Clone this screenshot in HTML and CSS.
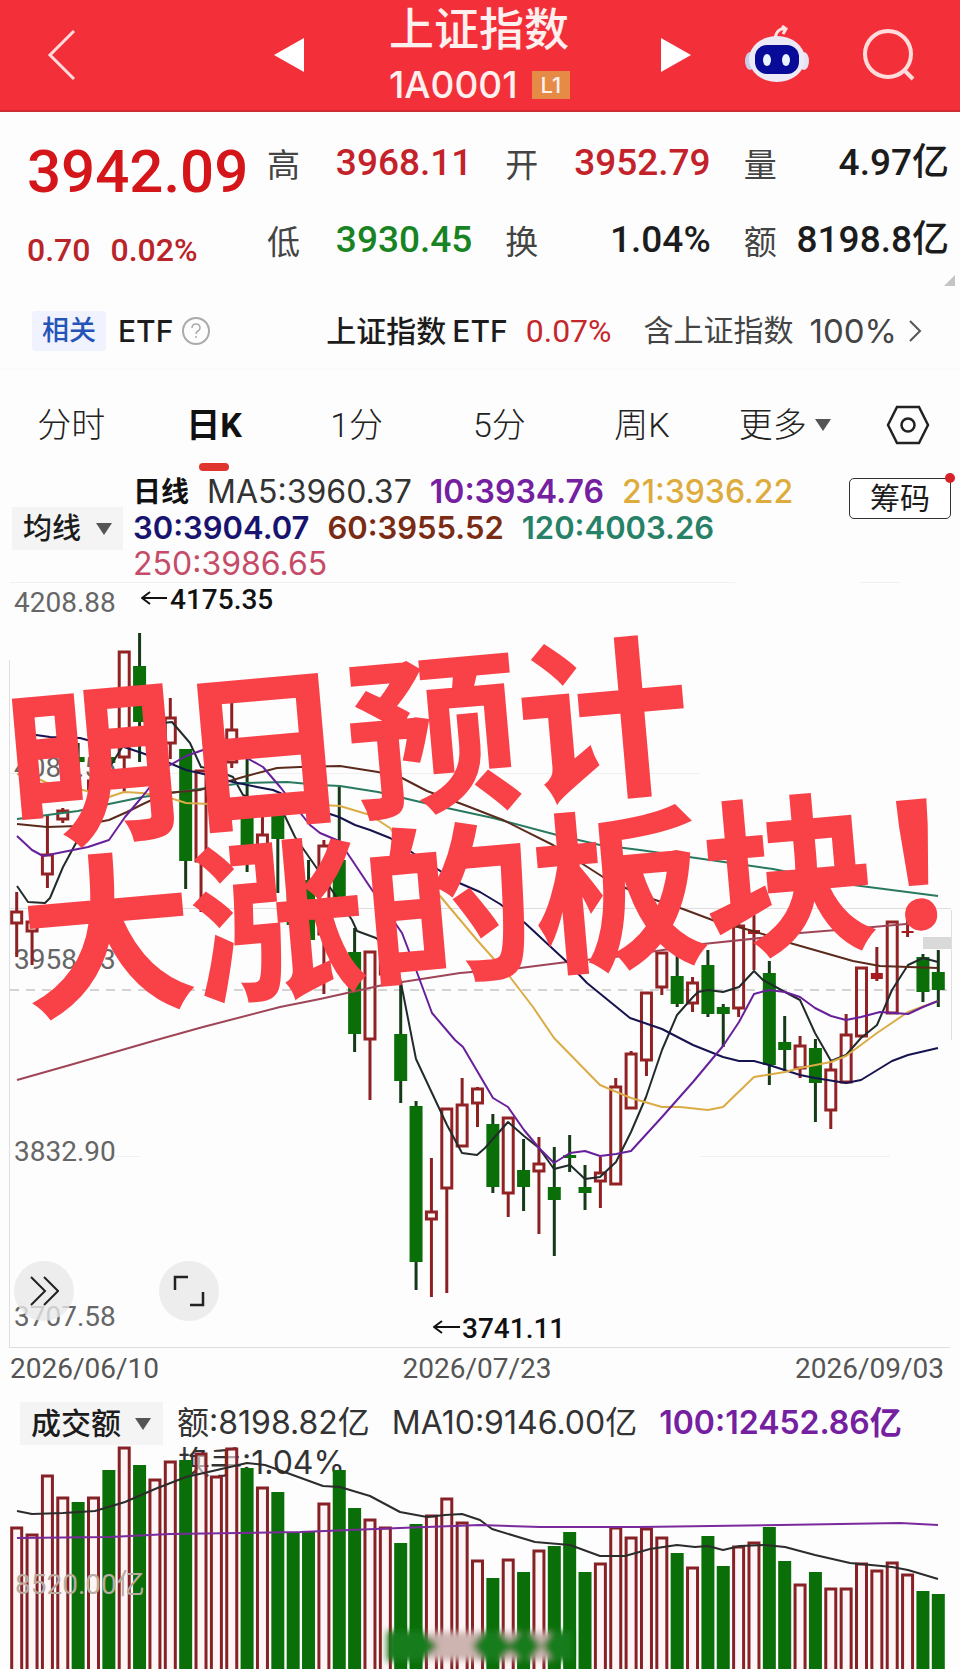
FILE: index.html
```html
<!DOCTYPE html>
<html lang="zh-CN">
<head>
<meta charset="utf-8">
<meta name="viewport" content="width=device-width, initial-scale=1">
<title>上证指数 1A0001</title>
<link rel="stylesheet" href="styles.css">
</head>
<body>
<header class="topbar">
  <button class="icon-btn back" aria-label="返回"><svg width="30" height="52" viewBox="0 0 30 52"><path d="M27 2 3 26 27 50" fill="none" stroke="#ffdcdc" stroke-width="3"/></svg></button>
  <button class="icon-btn prev" aria-label="上一个"><svg width="30" height="34" viewBox="0 0 30 34"><path d="M0 17 30 0V34Z" fill="#fff"/></svg></button>
  <div class="heading">
    <h1 class="name">上证指数</h1>
    <p class="code">1A0001<span class="level">L1</span></p>
  </div>
  <button class="icon-btn next" aria-label="下一个"><svg width="30" height="34" viewBox="0 0 30 34"><path d="M30 17 0 0V34Z" fill="#fff"/></svg></button>
  <button class="icon-btn robot" aria-label="智能助手"><svg width="66" height="60" viewBox="0 0 66 60">
    <path d="M31 14C32 6 36 3 42 4M38 1l4 3-3 5" fill="none" stroke="#ffe4e4" stroke-width="3"/>
    <ellipse cx="6" cy="36" rx="5" ry="9" fill="#c9cde6"/><ellipse cx="60" cy="36" rx="5" ry="9" fill="#e6e2f2"/>
    <ellipse cx="33" cy="34" rx="28" ry="23" fill="#eceaf6"/>
    <rect x="11" y="20" width="44" height="29" rx="12" fill="#080a98"/>
    <ellipse cx="23" cy="35" rx="4" ry="6" fill="#e8f4ff"/><ellipse cx="42" cy="35" rx="4" ry="6" fill="#e8f4ff"/>
  </svg></button>
  <button class="icon-btn search" aria-label="搜索"><svg width="54" height="52" viewBox="0 0 54 52"><circle cx="26" cy="25" r="23" fill="none" stroke="#ffdcdc" stroke-width="4"/><path d="m42 41 9 9" stroke="#ffdcdc" stroke-width="4"/></svg></button>
</header>

<section class="quote">
  <div class="last">
    <strong class="price">3942.09</strong>
    <p class="change"><span>0.70</span><span>0.02%</span></p>
  </div>
  <dl class="stats">
    <div class="stat"><dt>高</dt><dd class="up">3968.11</dd></div>
    <div class="stat"><dt>开</dt><dd class="up">3952.79</dd></div>
    <div class="stat"><dt>量</dt><dd>4.97亿</dd></div>
    <div class="stat"><dt>低</dt><dd class="down">3930.45</dd></div>
    <div class="stat"><dt>换</dt><dd>1.04%</dd></div>
    <div class="stat"><dt>额</dt><dd>8198.8亿</dd></div>
  </dl>
  <svg class="corner" width="11" height="11" viewBox="0 0 11 11"><path d="M11 0V11H0Z" fill="#c4c4c4"/></svg>
</section>

<section class="related">
  <span class="tag">相关</span><span class="etf">ETF</span>
  <svg class="help" width="28" height="28" viewBox="0 0 28 28"><circle cx="14" cy="14" r="13" fill="none" stroke="#aaa" stroke-width="2"/><path d="M10 11q0-4 4-4t4 4q0 2-2 3t-2 3m0 2v2" fill="none" stroke="#aaa" stroke-width="1.5"/></svg>
  <a class="fund" href="#">上证指数<span class="latin">ETF</span></a>
  <span class="fund-change">0.07%</span>
  <a class="weight" href="#">含上证指数<span class="latin">100%</span><svg width="13" height="22" viewBox="0 0 13 22"><path d="m1 1 10 10L1 21" fill="none" stroke="#555" stroke-width="2"/></svg></a>
</section>

<nav class="tabs">
  <button class="tab">分时</button>
  <button class="tab active">日K</button>
  <button class="tab">1分</button>
  <button class="tab">5分</button>
  <button class="tab">周K</button>
  <button class="tab more">更多<span class="caret"></span></button>
  <button class="tab" aria-label="设置"><svg width="44" height="40" viewBox="0 0 44 40"><path d="M11 2H33L42 20 33 38H11L2 20Z" fill="none" stroke="#222" stroke-width="2.5"/><circle cx="22" cy="20" r="6.5" fill="none" stroke="#222" stroke-width="2.5"/></svg></button>
</nav>

<section class="legend">
  <label class="picker"><select aria-label="指标"><option>均线</option></select><span class="caret"></span></label>
  <div class="averages">
    <p><b class="period">日线</b><span>MA5:3960.37</span><span class="ma10">10:3934.76</span><span class="ma21">21:3936.22</span></p>
    <p class="compact"><span class="ma30">30:3904.07</span><span class="ma60">60:3955.52</span><span class="ma120">120:4003.26</span></p>
    <p><span class="ma250">250:3986.65</span></p>
  </div>
  <button class="chips">筹码<span class="dot"></span></button>
</section>

<main class="panel">
  <svg class="chart" id="kline" viewBox="0 580 960 768" role="img" aria-label="日K线图"></svg>
  <p class="slogan"><span>明日预计</span><span>大涨的板块！</span></p>
  <button class="round forward" aria-label="前进"><svg width="30" height="30" viewBox="0 0 30 30"><path d="M2 1 16 15 2 29M15 1 29 15 15 29" fill="none" stroke="#222" stroke-width="2"/></svg></button>
  <button class="round expand" aria-label="全屏"><svg width="32" height="32" viewBox="0 0 32 32"><path d="M2 15V2H15M30 17V30H17" fill="none" stroke="#222" stroke-width="2.5"/></svg></button>
</main>
<div class="dates"><time>2026/06/10</time><time>2026/07/23</time><time>2026/09/03</time></div>

<section class="turnover">
  <label class="picker"><select aria-label="副图指标"><option>成交额</option></select><span class="caret"></span></label>
  <p class="amounts"><span>额:8198.82亿</span><span>MA10:9146.00亿</span><span class="ma10">100:12452.86亿</span></p>
</section>
<svg class="chart" id="volume" viewBox="0 1446 960 223" role="img" aria-label="成交额"></svg>
<script src="chart.js"></script>
</body>
</html>
```
FILE: styles.css
```css
* { box-sizing: border-box; }
body {
  margin: 0;
  background: #fdfdfd;
  color: #1c1c1c;
  font-family: Roboto, "Noto Sans CJK SC", sans-serif;
}
h1, p, dl, dd { margin: 0; }
button, select {
  border: 0;
  padding: 0;
  background: none;
  color: inherit;
  font: inherit;
  appearance: none;
}
a { color: inherit; text-decoration: none; }
svg { display: block; }

.topbar {
  display: grid;
  grid-template-columns: 47fr 227fr 115fr 182fr 120fr 53fr 118fr 98fr;
  align-items: center;
  height: 112px;
  background: #f3303a;
  border-bottom: 2px solid #cf2c34;
  color: #fff0f0;
}
.icon-btn { justify-self: start; }
.back { grid-column: 2; }
.prev { grid-column: 3; }
.heading { grid-column: 4; white-space: nowrap; }
.next { grid-column: 5; justify-self: end; }
.robot { grid-column: 7; }
.name { font-size: 45px; line-height: 60px; font-weight: 500; }
.code { display: flex; align-items: center; gap: 14px; font: 500 37px/48px Inter, sans-serif; }
.level { background: #e58b45; padding: 0 9px; font-size: 22px; line-height: 28px; }

.quote {
  position: relative;
  display: grid;
  grid-template-columns: 240px 1fr;
  padding: 24px 11px 0 27px;
  height: 178px;
  font-weight: 500;
}
.price { display: block; font-size: 60px; line-height: 72px; font-weight: 500; color: #d4161b; }
.change { display: flex; gap: 20px; margin-top: 22px; font-size: 32px; line-height: 40px; color: #b82429; }
.stats { display: grid; grid-template-columns: repeat(3, 1fr); grid-auto-rows: 77px; column-gap: 33px; margin-top: -12px; }
.stat { display: flex; justify-content: space-between; align-items: center; white-space: nowrap; }
.stat dt { font-size: 33px; font-weight: 400; color: #444; }
.stat dd { font-size: 37px; line-height: 44px; }
.up { color: #c4222a; }
.down { color: #188322; }
.corner { position: absolute; right: 5px; bottom: 4px; }

.related {
  display: flex;
  align-items: center;
  height: 80px;
  padding: 4px 38px 0 32px;
  border-bottom: 2px solid #fafafa;
  font-size: 30px;
  line-height: 40px;
  white-space: nowrap;
}
.tag { padding: 0 10px; background: #f0f2fd; border-radius: 4px; color: #2454b8; font-size: 27px; line-height: 40px; font-weight: 500; }
.etf { margin-left: 12px; font: 500 30px/40px Inter, sans-serif; }
.help { margin-left: 9px; }
.fund { margin-left: auto; font-weight: 500; }
.latin { margin-left: 6px; font: 500 30px/40px Inter, sans-serif; }
.fund-change { margin-left: 18px; color: #c4282c; font-size: 32px; }
.weight { display: flex; align-items: center; margin-left: 32px; color: #444; }
.weight .latin { margin-left: 16px; font-size: 33px; font-weight: 400; }
.weight svg { margin-left: 12px; }

.tabs { display: grid; grid-template-columns: repeat(6, 1fr) 104px; height: 105px; padding-top: 10px; }
.tab { position: relative; display: flex; justify-content: center; align-items: center; height: 90px; font-size: 34px; line-height: 44px; font-weight: 300; color: #222; }
.active { font-weight: 700; color: #111; }
.active::after { content: ""; position: absolute; bottom: -1px; width: 30px; height: 8px; border-radius: 4px; background: #e0352f; }
.caret { border: 8px solid transparent; border-top: 12px solid #555; border-bottom: 0; pointer-events: none; }
.more { gap: 8px; }

.legend { display: grid; grid-template-columns: 111px 1fr 102px; column-gap: 10px; height: 105px; padding: 0 9px 0 12px; }
.picker { display: flex; align-items: center; gap: 14px; padding: 0 11px; height: 43px; background: #f4f4f4; font-size: 29px; font-weight: 500; }
.legend .picker { margin-top: 32px; }
.picker select { line-height: 40px; }
.averages, .amounts { font-family: Inter, "Noto Sans CJK SC", sans-serif; font-size: 32px; color: #333; white-space: nowrap; }
.averages { line-height: 34px; }
.averages p { display: flex; height: 36px; gap: 18px; }
.averages .compact { font-size: 31px; }
.period { font-size: 28px; color: #111; }
.ma10 { color: #7420a0; font-weight: 600; }
.ma21 { color: #deac3c; font-weight: 500; }
.ma30 { color: #17136f; font-weight: 600; }
.ma60 { color: #7a2b14; font-weight: 600; }
.ma120 { color: #278167; font-weight: 600; }
.ma250 { color: #c54c68; }
.chips { position: relative; margin-top: 3px; height: 41px; border: 1px solid #333; border-radius: 5px; background: #fff; font-size: 30px; line-height: 38px; }
.dot { position: absolute; top: -6px; right: -5px; width: 10px; height: 10px; border-radius: 50%; background: #d8202a; }

.panel { position: relative; }
.chart { width: 100%; height: auto; overflow: visible; }
.slogan {
  position: absolute;
  top: 96px;
  left: 14px;
  color: #f94148;
  font: 700 171px/171px "Noto Sans CJK SC", sans-serif;
  font-feature-settings: "halt";
  -webkit-text-stroke: 2px #f94148;
  white-space: nowrap;
  transform: rotate(-5deg);
  transform-origin: 0 50%;
}
.slogan span { display: block; }
.round { position: absolute; bottom: 27px; display: grid; place-items: center; width: 60px; height: 60px; border-radius: 50%; background: rgba(232, 232, 232, 0.8); }
.forward { left: 14px; }
.expand { left: 159px; }
.dates { display: flex; justify-content: space-between; height: 42px; padding: 0 16px 0 10px; font-size: 28px; line-height: 41px; color: #555; }

.turnover { display: flex; gap: 14px; height: 56px; padding: 12px 20px 0; }
.turnover .picker { min-width: 143px; font-size: 30px; }
.amounts { display: flex; gap: 22px; line-height: 42px; }

.axis { font-size: 28px; fill: #666; }
.mark { font-size: 28px; font-weight: 500; fill: #111; }
.rate { font: 32px Inter, "Noto Sans CJK SC", sans-serif; fill: #333; }
.scale { font-size: 28px; fill: #b9aaa2; }
.frame { fill: none; stroke: #dedede; stroke-width: 1; }
.faint { stroke: #f1f1f1; }
.dash { stroke-dasharray: 9 7; stroke: #aaa; }
.hollow { fill: none; stroke: #922224; stroke-width: 3; }
.solid { fill: #0a6f08; stroke: none; }
.wick-up { fill: none; stroke: #8c2022; stroke-width: 3; }
.wick-down { fill: none; stroke: #143a16; stroke-width: 3; }
.line { fill: none; stroke-width: 2; stroke-linejoin: round; }
.bar { fill: #fff1f1; fill-opacity: 0.6; stroke: #862226; stroke-width: 3; }
```
FILE: chart.js
```js
const STEP = 15.36, START = 16.7;
const xAt = i => START + i * STEP;

// direction, high, body top, body bottom, low
const candles = [
  ['r',892,911,924,957],['r',915,921,932,965],['r',815,854,875,888],['r',808,810,820,823],['g',743,757,762,782],
  ['r',775,780,790,792],['g',745,757,763,766],['r',651,651,758,793],['g',633,666,722,762],['r',720,725,755,760],
  ['r',698,717,744,759],['g',749,749,861,889],['r',770,770,862,912],['r',775,775,812,815],['r',690,729,763,768],
  ['g',758,818,846,872],['r',806,834,850,856],['g',803,810,839,893],['g',850,870,925,945],['g',860,880,940,948],
  ['r',840,845,935,994],['g',787,860,898,905],['g',928,952,1034,1052],['r',951,951,1040,1100],['r',930,940,975,985],
  ['g',982,1034,1081,1103],['g',1101,1106,1262,1290],['r',1158,1211,1220,1297],['r',1108,1108,1189,1293],['r',1078,1104,1147,1147],
  ['r',1087,1088,1104,1127],['g',1114,1124,1187,1193],['r',1117,1117,1194,1217],['g',1139,1170,1187,1211],['r',1137,1163,1172,1234],
  ['g',1147,1187,1200,1256],['g',1135,1155,1158,1172],['g',1165,1187,1193,1210],['r',1157,1172,1182,1208],['r',1078,1086,1185,1185],
  ['r',1051,1053,1109,1109],['r',992,992,1061,1076],['r',952,952,988,995],['g',952,976,1004,1007],['r',977,982,1004,1012],
  ['g',950,965,1014,1017],['g',1004,1007,1014,1047],['r',920,925,1009,1017],['r',915,930,934,970],['g',961,973,1065,1085],
  ['g',1016,1042,1050,1071],['r',1036,1045,1069,1078],['g',1039,1048,1083,1122],['r',1061,1069,1111,1129],['r',1014,1034,1083,1083],
  ['r',967,967,1037,1037],['r',947,973,979,981],['r',921,921,1014,1014],['r',909,931,933,937],['g',954,957,992,1002],['g',950,972,990,1007]
];
const volumes = [
  1527,1534,1475,1497,1502,1497,1470,1447,1465,1479,1461,1460,1453,1476,1448,1468,1487,1492,1532,1532,1503,
  1470,1508,1519,1527,1543,1524,1515,1498,1522,1560,1578,1559,1572,1550,1546,1532,1572,1563,1527,1537,1528,
  1537,1553,1567,1536,1566,1546,1542,1527,1561,1584,1572,1588,1588,1563,1570,1562,1574,1591,1594
];
const priceLines = [
  ['#222b2b','17,886 28,902 45,903 50,898 63,867 83,830 105,775 116,757 130,735 145,727 163,723 172,722 190,743 201,767 212,769 233,777 243,795 281,808 295,837 325,880 352,920 357,931 376,938 395,955 401,983 416,1059 447,1125 462,1153 477,1155 485,1148 508,1122 524,1136 539,1148 554,1169 570,1165 585,1179 600,1177 616,1162 631,1132 646,1097 662,1050 677,1015 693,997 698,992 708,990 723,992 739,987 754,971 763,980 785,992 800,1000 815,1033 831,1061 846,1055 861,1038 877,1025 892,990 908,965 923,958 938,962'],
  ['#28795f','17,819 78,811 109,804 143,797 170,793 207,788 243,783 287,782 320,785 340,786 378,792 433,805 493,818 557,835 600,845 640,850 710,860 773,869 853,885 938,896'],
  ['#5a2a1c','17,824 47,827 78,826 109,820 127,812 143,804 167,793 200,790 243,777 277,768 300,767 340,766 378,772 402,778 427,791 467,806 503,820 553,845 603,877 640,895 683,909 715,921 753,931 790,943 853,961 880,966 938,968'],
  ['#9e4558','17,1080 70,1065 160,1039 203,1027 280,1007 320,999 383,985 460,973 520,968 567,962 623,956 703,944 770,937 800,933 873,927 917,923'],
  ['#16144f','17,733 36,735 50,737 80,738 109,746 124,747 142,753 167,762 186,770 208,775 233,782 257,787 273,790 327,813 339,817 355,825 370,830 390,838 457,882 480,892 500,904 525,923 567,962 587,983 630,1018 662,1029 693,1045 723,1057 739,1061 754,1061 769,1065 800,1075 815,1078 846,1083 861,1080 892,1061 908,1055 938,1048'],
  ['#dbab45','17,774 41,780 55,787 83,790 109,797 124,792 142,793 167,797 186,803 210,804 270,806 323,805 340,806 370,815 390,828 435,890 477,940 510,977 533,1007 554,1038 600,1085 631,1098 662,1107 680,1107 708,1110 723,1107 754,1077 785,1072 800,1068 831,1062 846,1056 877,1033 908,1012 938,1001'],
  ['#68209a','17,836 32,850 43,856 63,852 88,847 109,840 125,817 142,797 165,768 186,756 203,750 218,748 238,753 263,767 281,788 298,810 310,825 320,833 339,841 352,860 370,887 402,933 415,967 432,1013 455,1040 463,1047 493,1098 508,1107 524,1130 539,1148 554,1163 570,1153 585,1151 600,1156 616,1154 631,1151 662,1117 693,1082 723,1046 739,1022 754,994 769,990 785,992 800,997 815,1008 831,1016 846,1020 861,1017 880,1012 908,1014 923,1007 938,1001']
];
const volumeLines = [
  ['#2c2c2c','17,1511 32,1514 63,1513 95,1511 125,1502 155,1489 186,1477 217,1470 247,1463 265,1465 290,1474 323,1486 340,1487 370,1496 400,1512 427,1517 445,1515 462,1514 480,1520 492,1529 535,1542 570,1545 600,1556 625,1556 650,1549 677,1545 695,1547 708,1546 723,1550 740,1546 765,1545 785,1547 815,1555 850,1563 892,1567 908,1570 938,1579'],
  ['#7a2a9c','17,1538 110,1537 170,1534 300,1532 400,1528 480,1525 540,1527 640,1527 780,1525 900,1523 938,1525']
];
const drawLines = lines => lines.map(([color, points]) => `<polyline class="line" stroke="${color}" points="${points}"/>`).join('');

function drawCandle([dir, high, top, bottom, low], i) {
  const x = xAt(i);
  if (dir === 'g') {
    return `<path class="wick-down" d="M${x} ${high}V${low}"/><rect class="solid" x="${x - 6.5}" y="${top}" width="13" height="${bottom - top}"/>`;
  }
  const tall = bottom - top;
  const body = tall < 7
    ? `<rect x="${x - 6}" y="${top}" width="12" height="${tall}" fill="#a81c20"/>`
    : `<rect class="hollow" x="${x - 5}" y="${top + 1}" width="10" height="${tall - 2}"/>`;
  return `<path class="wick-up" d="M${x} ${high}V${top}M${x} ${bottom}V${low}"/>${body}`;
}

document.getElementById('kline').innerHTML = `
  <path class="frame" d="M9.5 660V1347.5H950M951.5 910V1040M10 908.5H951"/>
  <path class="frame faint" d="M10 582.5H735M860 582.5H900M10 773.5H700M110 1156.5H140M700 1156.5H890"/>
  <path class="frame dash" d="M10 990H951"/>
  <rect x="923" y="937" width="28" height="12" fill="#d9d9d9"/>
  <text class="axis" x="14" y="612">4208.88</text>
  <text class="axis" x="14" y="777">4083.55</text>
  <text class="axis" x="14" y="969">3958.23</text>
  <text class="axis" x="14" y="1161">3832.90</text>
  <text class="axis" x="14" y="1326">3707.58</text>
  ${candles.map(drawCandle).join('')}
  ${drawLines(priceLines)}
  <path class="line" stroke="#111" d="M167 598H142m8-6-8 6 8 6M460 1327H434m8-6-8 6 8 6"/>
  <text class="mark" x="170" y="609">4175.35</text>
  <text class="mark" x="462" y="1338">3741.11</text>`;

document.getElementById('volume').innerHTML = `
  <defs><filter id="soft" x="-20%" y="-50%" width="140%" height="200%"><feGaussianBlur stdDeviation="3"/></filter></defs>
  <text class="rate" x="178" y="1474">换手:1.04%</text>
  ${volumes.map((y, i) => candles[i][0] === 'g'
    ? `<rect class="solid" x="${xAt(i) - 6.5}" y="${y}" width="13" height="${1669 - y}"/>`
    : `<path class="bar" d="M${xAt(i) - 5} 1669V${y + 1}h10V1669"/>`).join('')}
  ${drawLines(volumeLines)}
  <text class="scale" x="15" y="1594">8520.00亿</text>
  <g filter="url(#soft)">
    <rect x="430" y="1632" width="120" height="28" fill="#cdb4b0"/>
    <path fill="#187c1c" d="M387 1631H422L438 1646 422 1661H387ZM472 1646 484 1631H500L510 1643 520 1631H530L541 1646 530 1661H520L510 1650 500 1661H484ZM542 1646 552 1631H572V1661H552Z"/>
  </g>`;
```
